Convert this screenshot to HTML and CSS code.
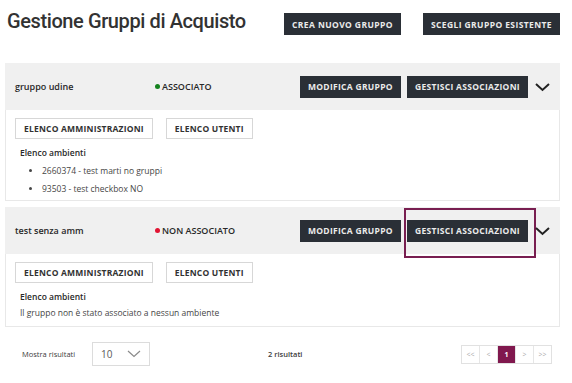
FILE: index.html
```html
<!DOCTYPE html>
<html lang="it">
<head>
    <meta charset="UTF-8">
    <title>Gestione Gruppi di Acquisto</title>
    <link rel="stylesheet" href="styles.css">
</head>
<body>

<div class="page">
    <div class="top">
        <h1>Gestione Gruppi di Acquisto</h1>
        <div class="top-actions">
            <button class="btn-dark">Crea nuovo gruppo</button>
            <button class="btn-dark">Scegli gruppo esistente</button>
        </div>
    </div>

    <div class="panel">
        <div class="panel-head">
            <span class="group-name">gruppo udine</span>
            <span class="status"><i class="dot dot-green"></i>ASSOCIATO</span>
            <div class="head-actions">
                <button class="btn-dark">Modifica gruppo</button>
                <button class="btn-dark">Gestisci associazioni</button>
                <svg class="chevron" width="15" height="10" viewBox="0 0 15 10"><path d="M1 2 L7.5 8 L14 2" fill="none" stroke="#222" stroke-width="2"/></svg>
            </div>
        </div>
        <div class="panel-body">
            <div class="body-actions">
                <button class="btn-light">Elenco amministrazioni</button>
                <button class="btn-light">Elenco utenti</button>
            </div>
            <div class="list-title">Elenco ambienti</div>
            <ul class="env-list">
                <li>2660374 - test marti no gruppi</li>
                <li>93503 - test checkbox NO</li>
            </ul>
        </div>
    </div>

    <div class="panel">
        <div class="panel-head">
            <span class="group-name">test senza amm</span>
            <span class="status"><i class="dot dot-red"></i>NON ASSOCIATO</span>
            <div class="head-actions">
                <button class="btn-dark">Modifica gruppo</button>
                <span class="focus-ring"><button class="btn-dark">Gestisci associazioni</button></span>
                <svg class="chevron" width="15" height="10" viewBox="0 0 15 10"><path d="M1 2 L7.5 8 L14 2" fill="none" stroke="#222" stroke-width="2"/></svg>
            </div>
        </div>
        <div class="panel-body">
            <div class="body-actions">
                <button class="btn-light">Elenco amministrazioni</button>
                <button class="btn-light">Elenco utenti</button>
            </div>
            <div class="list-title">Elenco ambienti</div>
            <div class="empty">Il gruppo non è stato associato a nessun ambiente</div>
        </div>
    </div>

    <div class="footer">
        <span class="show-label">Mostra risultati</span>
        <div class="select">
            <span>10</span>
            <svg width="14" height="8" viewBox="0 0 14 8"><path d="M1 1 L7 6.5 L13 1" fill="none" stroke="#8a8a8a" stroke-width="1.2"/></svg>
        </div>
        <span class="count">2 risultati</span>
        <div class="pager">
            <span>&lt;&lt;</span>
            <span>&lt;</span>
            <span class="active">1</span>
            <span>&gt;</span>
            <span>&gt;&gt;</span>
        </div>
    </div>
</div>

</body>
</html>
```

FILE: styles.css
```css
body {
    margin: 0;
    font-family: "Open Sans", sans-serif;
    color: rgb(40, 40, 40);
    background: white;
}
.page {
    width: 555px;
    padding-left: 5px;
}
.top {
    display: flex;
    align-items: flex-start;
    height: 63px;
}
h1 {
    margin: 8px 0 0 2px;
    font-family: Roboto, sans-serif;
    font-size: 20px;
    font-weight: 500;
    line-height: 26px;
    color: rgb(50, 50, 50);
    letter-spacing: -0.4px;
}
.top-actions {
    margin-left: auto;
    margin-top: 13px;
    display: flex;
    gap: 22px;
}
button {
    font-family: "Open Sans", sans-serif;
    text-transform: uppercase;
    font-weight: 700;
    font-size: 8.5px;
    letter-spacing: 0.3px;
    cursor: pointer;
}
.btn-dark {
    background: rgb(42, 47, 54);
    color: rgb(235, 235, 235);
    border: none;
    height: 22px;
    padding: 0 8px;
}
.top-actions .btn-dark {
    letter-spacing: 0.4px;
}
.btn-light {
    background: white;
    color: rgb(50, 50, 50);
    border: 1px solid rgb(215, 215, 215);
    height: 21px;
    padding: 0 8px;
    letter-spacing: 0.2px;
}
.panel {
    margin-bottom: 6px;
}
.panel-head {
    display: flex;
    align-items: center;
    height: 47px;
    background: rgb(240, 240, 240);
    padding-left: 10px;
    font-size: 9px;
    font-weight: 600;
}
.group-name {
    width: 140px;
}
.status {
    display: flex;
    align-items: center;
}
.dot {
    width: 5px;
    height: 5px;
    border-radius: 50%;
    margin-right: 2px;
}
.dot-green {
    background: rgb(20, 130, 30);
}
.dot-red {
    background: rgb(225, 20, 50);
}
.head-actions {
    margin-left: auto;
    display: flex;
    align-items: center;
    gap: 6px;
    padding-right: 10px;
}
.focus-ring {
    display: flex;
    padding: 10px 6px 14px 1px;
    margin: -12px -8px -16px -3px;
    border: 2px solid rgb(120, 30, 80);
}
.chevron {
    margin-left: 1px;
}
.panel-body {
    border: 1px solid rgb(232, 232, 232);
    border-top: none;
    padding: 8px 9px 2px 9px;
    font-size: 8.5px;
    line-height: 12px;
    color: rgb(70, 70, 70);
}
.body-actions {
    display: flex;
    gap: 13px;
    margin-bottom: 8px;
}
.list-title {
    font-weight: 600;
    color: rgb(40, 40, 40);
    margin-left: 5px;
    margin-bottom: 3px;
}
.env-list {
    margin: 0;
    padding-left: 27px;
    line-height: 18px;
}
.empty {
    margin: 4px 0 5px 5px;
}
.footer {
    display: flex;
    align-items: center;
    margin-top: 11px;
    padding-top: 4px;
    font-size: 7.5px;
    color: rgb(60, 60, 60);
}
.show-label {
    margin-left: 17px;
    width: 70px;
}
.select {
    display: flex;
    align-items: center;
    justify-content: space-between;
    width: 40px;
    height: 22px;
    padding: 0 8px;
    border: 1px solid rgb(220, 220, 220);
    font-size: 10px;
    color: rgb(90, 90, 90);
}
.count {
    margin-left: 118px;
    font-weight: 600;
}
.pager {
    margin-left: auto;
    margin-right: 8px;
    display: flex;
    border: 1px solid rgb(225, 225, 225);
}
.pager span {
    width: 17px;
    height: 17px;
    display: flex;
    align-items: center;
    justify-content: center;
    font-size: 7px;
    color: rgb(170, 170, 170);
    border-left: 1px solid rgb(230, 230, 230);
}
.pager span:first-child {
    border-left: none;
}
.pager .active {
    background: rgb(128, 24, 78);
    color: white;
    font-weight: 700;
}
```
